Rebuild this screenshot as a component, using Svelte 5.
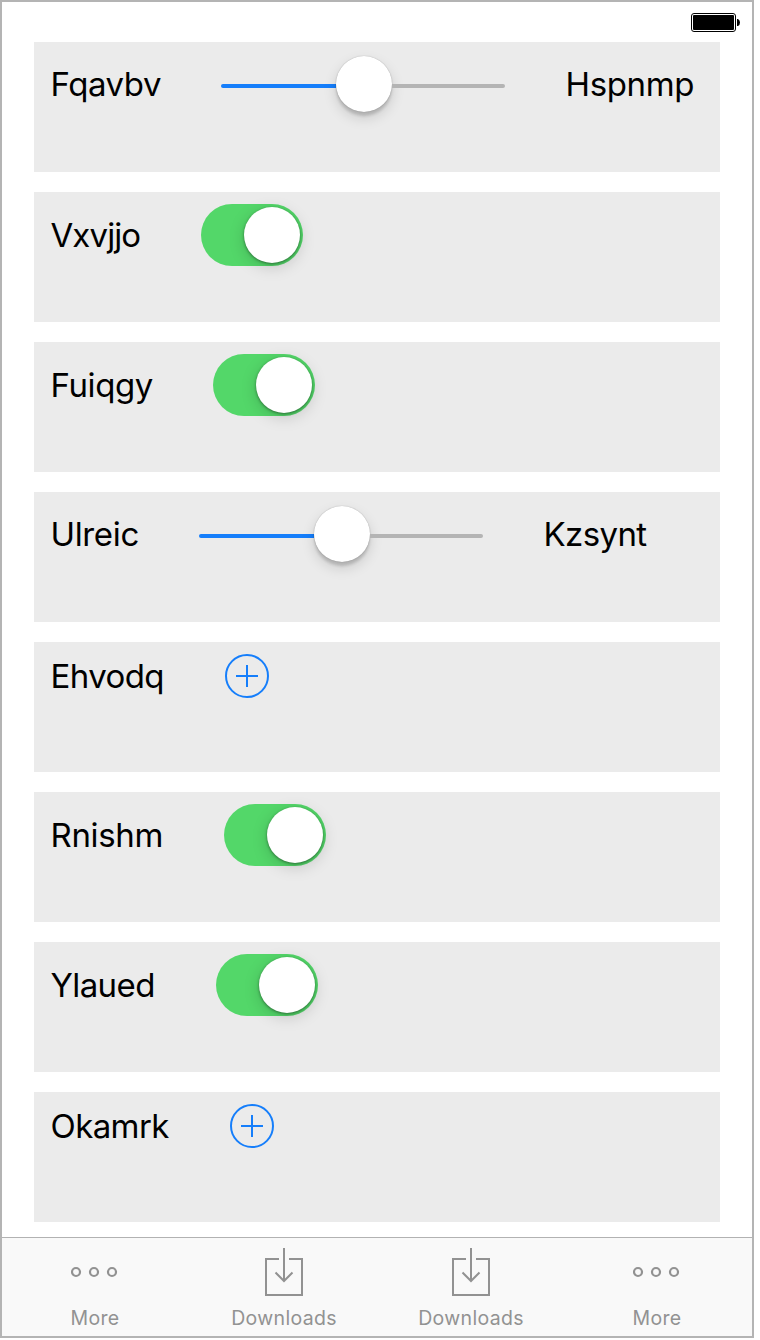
<script>
  const rows = [
    { label: 'Fqavbv', width: 171, kind: 'slider', end: 'Hspnmp', track: -0.45, endTrack: -0.35 },
    { label: 'Vxvjjo', width: 151, kind: 'switch', track: -0.9 },
    { label: 'Fuiqgy', width: 163, kind: 'switch', track: -0.4 },
    { label: 'Ulreic', width: 149, kind: 'slider', end: 'Kzsynt', track: -0.35, endTrack: -0.6 },
    { label: 'Ehvodq', width: 175, kind: 'add', track: -0.6 },
    { label: 'Rnishm', width: 174, kind: 'switch', track: -0.35 },
    { label: 'Ylaued', width: 166, kind: 'switch', track: -0.6 },
    { label: 'Okamrk', width: 180, kind: 'add', track: -0.6 }
  ];
  const tabs = ['More', 'Downloads', 'Downloads', 'More'];
</script>

<div class="screen">
  <header>
    <svg width="50" height="20" viewBox="0 0 50 20">
      <rect x="0.5" y="0.5" width="44" height="18" rx="2.5" fill="#fff" stroke="#000" />
      <rect x="2" y="2" width="41" height="15" rx="1" />
      <path d="M46 6h1q2 1 2 3.500t-2 3.500h-1z" />
    </svg>
  </header>

  <main>
    {#each rows as row}
      <section>
        <div class="line">
          <span class="label" style="width: {row.width}px; letter-spacing: {row.track}px">{row.label}</span>
          {#if row.kind === 'slider'}
            <div class="slider"><i class="fill"></i><b class="knob"></b><i class="rest"></i></div>
            <span class="label" style="letter-spacing: {row.endTrack}px">{row.end}</span>
          {:else if row.kind === 'switch'}
            <div class="switch"><b class="knob"></b></div>
          {:else}
            <svg width="44" height="44" viewBox="0 0 44 44" fill="none" stroke="#157efb" stroke-width="2">
              <circle cx="22" cy="22" r="21" />
              <path d="M11 22h22M22 11v22" />
            </svg>
          {/if}
        </div>
      </section>
    {/each}
  </main>

  <nav>
    {#each tabs as tab}
      <div class="tab">
        {#if tab === 'More'}
          <svg width="48" height="50" viewBox="0 0 48 50" fill="none" stroke="#929292" stroke-width="2.2">
            <circle cx="5" cy="24" r="4" /><circle cx="23" cy="24" r="4" /><circle cx="41" cy="24" r="4" />
          </svg>
        {:else}
          <svg width="38" height="50" viewBox="0 0 38 50" fill="none" stroke="#929292" stroke-width="2">
            <path d="M14 11H1v36h36V11H24M19 0v33M10.500 24.500l8.500 8.500 8.500-8.500" />
          </svg>
        {/if}
        <span>{tab}</span>
      </div>
    {/each}
  </nav>
</div>

<style>
  :global(body) { background: #fff; }
  .screen {
    box-sizing: border-box;
    width: 754px;
    height: 1338px;
    border: 2px solid #b4b4b4;
    background: #fff;
    display: flex;
    flex-direction: column;
    font-family: Inter, "Liberation Sans", sans-serif;
  }
  header {
    height: 40px;
    box-sizing: border-box;
    padding: 11px 12px 0 0;
    display: flex;
    justify-content: flex-end;
    flex: none;
  }
  header svg { margin-right: -1px; }
  main {
    flex: 1;
    display: flex;
    flex-direction: column;
    gap: 20px;
    padding: 0 32px;
  }
  section {
    height: 130px;
    box-sizing: border-box;
    background: #ebebeb;
    padding: 12px 16px;
  }
  .line { display: flex; align-items: center; }
  .label {
    box-sizing: border-box;
    flex: none;
    padding-left: .5px;
    font-size: 33px;
    line-height: 44px;
    color: #000;
    white-space: nowrap;
  }
  .slider {
    width: 284px;
    height: 60px;
    margin-right: 60px;
    display: flex;
    align-items: center;
    flex: none;
  }
  .slider i { height: 4px; margin-top: 4px; background: #b4b4b4; }
  .slider .fill { width: 115px; background: #157efb; border-radius: 2px 0 0 2px; }
  .slider .rest { flex: 1; border-radius: 0 2px 2px 0; }
  .knob {
    width: 56px;
    height: 56px;
    flex: none;
    border-radius: 50%;
    background: #fff;
    box-shadow: 0 0 1px rgba(0, 0, 0, .35), 0 4px 3px rgba(0, 0, 0, .15), 0 6px 14px rgba(0, 0, 0, .14);
  }
  .switch {
    box-sizing: border-box;
    width: 102px;
    height: 62px;
    padding: 3px;
    border-radius: 31px;
    background: #53d769;
    display: flex;
    justify-content: flex-end;
  }
  .switch .knob { box-shadow: 0 1px 3px rgba(0, 0, 0, .42), 0 4px 16px rgba(0, 0, 0, .17); }
  nav {
    height: 99px;
    box-sizing: border-box;
    flex: none;
    border-top: 1px solid #b2b2b2;
    background: #f9f9f9;
    display: grid;
    grid-template-columns: 186px 192px 182px 190px;
  }
  .tab {
    display: flex;
    flex-direction: column;
    align-items: center;
    padding-top: 10px;
    color: #929292;
    font-size: 19.500px;
    line-height: 24px;
    letter-spacing: .32px;
  }
  .tab span { margin-top: 8px; }
</style>
